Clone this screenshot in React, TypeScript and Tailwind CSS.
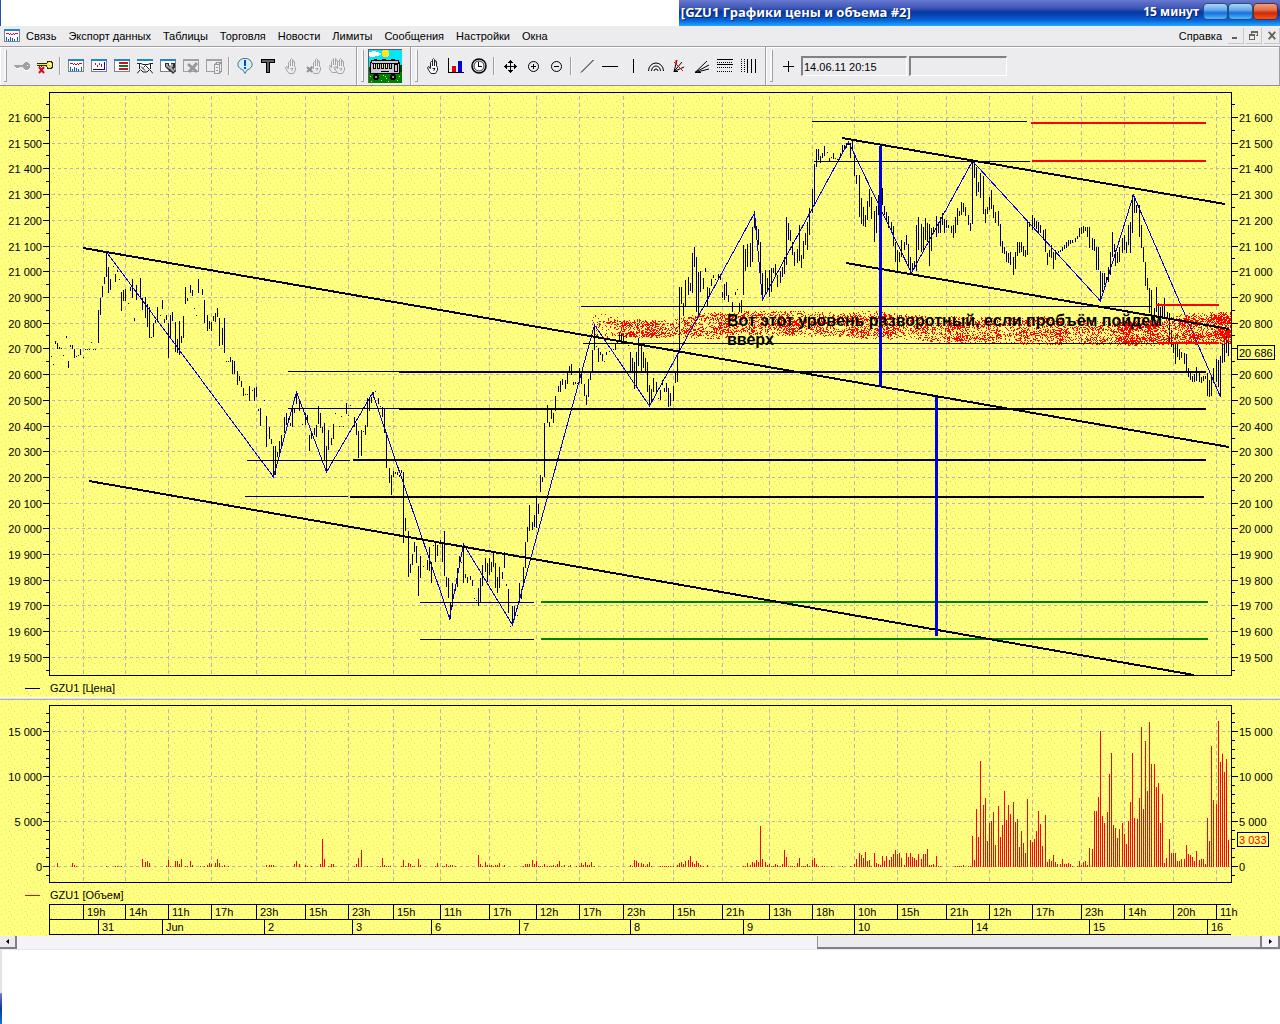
import React from 'react';

const PRICE_BARS = `51,356,357 53,364,365 55,341,344 57,343,349 59,347,349 61,348,349 63,355,356 66,336,338 68,361,368 70,345,347 72,345,349 74,349,358 76,356,357 78,355,356 80,349,355 83,357,358 85,349,350 87,349,350 89,349,350 91,342,343 93,349,350 95,349,350
98,310,343 100,298,315 102,286,297 104,277,284 106,252,277 108,267,293 110,279,290 113,266,267 115,274,282 117,270,272 119,279,280 121,292,311 123,290,301 125,289,301 128,303,304 130,287,291 132,279,298 134,318,321 136,285,300 140,278,299 142,298,310 145,297,318 147,304,327 149,307,338
151,337,338 153,323,337 155,320,323 157,307,320 160,315,316 162,300,309 164,319,323 166,315,320 168,323,358 170,315,338 172,312,321 175,322,352 177,339,353 179,321,355 181,336,343 183,316,338 185,287,304 187,298,301 190,285,293 192,290,296 194,308,309 196,315,316 198,279,293
202,289,295 204,300,323 207,315,331 209,321,329 211,322,331 213,316,321 215,313,322 217,308,317 219,318,346 222,328,345 224,318,353 226,361,362 228,361,362 230,357,362 232,360,374 234,361,374 237,371,385 239,376,381 241,381,387 243,388,396 245,394,395 247,394,395 249,386,401
252,390,391 254,388,401 256,387,397 258,409,411 260,408,426 264,400,401 266,416,447 269,427,439 271,439,444 273,446,477 275,446,475 277,452,457 279,441,453 281,435,446 284,417,433 286,413,425 288,418,420 290,423,426 292,408,427 294,409,413 296,391,404 299,400,411
302,424,425 305,413,425 307,415,422 309,435,451 311,431,439 314,428,435 316,425,437 318,406,424 320,413,428 322,427,433 324,423,460 326,446,472 328,430,450 331,438,445 333,424,439 335,413,414 339,426,427 341,416,417 343,426,427 346,403,414 348,415,416 350,405,406
354,417,427 356,423,435 358,431,458 361,430,456 363,431,432 365,425,435 367,398,427 369,397,411 371,397,403 373,392,395 375,391,392 378,398,404 380,406,407 382,407,417 384,409,433 386,433,468 389,468,483 391,475,495 393,471,477 395,472,474 397,472,475 399,475,477
401,470,473 403,472,543 405,518,531 408,531,577 410,564,573 412,554,565 414,542,552 416,546,563 418,566,596 420,556,578 423,566,567 425,546,547 427,560,570 429,547,571 431,562,583 433,545,546 435,542,562 437,545,556 440,540,543 442,542,562 444,531,576 446,577,587 448,578,598
450,603,619 452,583,607 455,585,591 457,568,587 459,556,568 461,562,563 463,543,583 465,574,578 467,577,583 470,576,580 472,580,586 474,598,599 476,600,601 478,588,606 480,578,603 482,565,586 485,558,572 487,563,582 489,558,575 491,562,572 493,552,567 495,563,588 497,577,593
499,567,588 502,572,579 504,552,568 506,584,586 508,589,613 510,626,627 512,606,624 514,606,617 517,615,616 519,583,602 521,589,599 523,567,586 525,542,568 527,527,542 529,505,531 532,522,530 534,515,527 536,498,528 538,504,514 540,475,492 542,477,482 544,423,477 547,405,423
549,422,427 551,410,419 553,413,423 555,396,411 558,386,392 560,381,392 562,379,385 565,380,389 567,372,384 569,366,373 571,364,375 573,382,385 575,382,384 577,383,384 579,368,383 581,374,384 584,384,396 586,395,405 588,379,397 590,372,380 592,350,372 594,325,350 596,346,347
598,348,362 600,352,355 602,354,361 604,361,362 606,352,355 609,351,352 613,349,350 615,343,350 617,340,344 619,333,340 621,333,342 623,333,342 626,335,338 628,345,346 630,352,371 632,358,373 634,362,389 636,352,387 638,338,366 641,345,372 643,352,368 645,358,371 647,362,392
649,385,407 651,389,402 653,378,392 656,382,392 658,398,399 660,390,400 662,380,385 664,388,392 666,383,392 668,388,407 670,393,406 673,386,401 675,372,383 677,353,382 679,287,350 681,287,304 683,303,316 685,280,306 688,277,295 690,283,291 692,253,293 694,247,267 696,257,312
698,272,315 700,271,292 703,278,289 705,268,272 707,287,307 709,288,296 711,279,286 713,275,278 715,279,280 718,274,280 720,275,280 722,292,298 724,284,300 726,282,296 728,295,302 732,302,312 735,292,295 737,289,290 739,303,312 741,300,313 743,245,295 745,249,271 747,244,267
750,243,267 752,227,262 754,211,228 756,226,235 758,229,245 760,242,273 762,273,297 765,270,295 767,278,292 769,270,297 771,268,292 773,268,273 775,264,275 777,275,287 780,271,283 782,267,277 784,257,274 786,217,265 788,223,240 790,230,241 792,242,255 794,252,266 797,249,263
799,225,261 801,255,268 803,241,259 805,233,245 807,222,250 809,208,235 812,189,213 814,164,206 816,149,167 818,149,160 820,156,163 822,153,158 824,146,156 827,152,153 829,158,161 831,157,158 833,153,159 835,158,159 837,159,160 840,153,158 842,145,153 844,145,150 846,143,148
848,141,145 850,143,158 852,140,150 854,153,176 856,175,184 859,175,217 861,198,224 863,207,226 865,215,227 867,201,220 869,189,207 871,197,219 874,211,242 876,206,233 878,195,215 882,188,205 884,206,215 886,212,220 888,216,228 891,222,232 893,226,246 895,242,262 897,250,271
899,252,262 901,240,257 904,242,250 906,235,245 908,244,266 910,257,273 912,263,272 914,261,267 916,225,271 918,217,250 921,224,252 923,227,250 925,218,240 927,223,242 929,224,266 931,228,251 933,227,234 936,216,237 938,223,233 940,217,233 942,213,225 944,219,233 946,220,228
948,225,228 951,226,233 953,225,238 955,217,233 957,208,225 959,211,216 961,202,215 963,203,212 965,207,216 968,215,225 970,223,231 972,161,224 974,164,178 976,167,196 978,182,192 980,173,198 983,176,214 985,209,223 987,207,214 989,197,210 991,190,209 993,205,218 995,212,223
998,211,226 1000,224,246 1002,241,253 1004,247,254 1006,251,262 1008,253,263 1010,252,265 1013,257,275 1015,252,269 1017,242,256 1019,242,253 1021,242,252 1023,246,256 1025,250,257 1027,222,255 1029,222,227 1032,215,230 1034,218,227 1036,221,229 1038,222,233 1040,225,233 1043,230,240
1045,229,252 1047,253,265 1049,250,257 1051,245,258 1053,252,269 1055,250,260 1058,251,253 1060,250,252 1062,247,251 1064,245,249 1066,242,248 1068,240,246 1070,240,244 1072,240,243 1075,238,242 1077,236,239 1079,228,237 1081,227,234 1083,226,233 1085,227,231 1087,227,237 1089,227,248
1092,238,250 1094,239,251 1096,247,270 1098,247,270 1100,271,300 1102,273,292 1104,273,285 1106,277,283 1108,267,282 1110,252,275 1112,232,257 1114,244,252 1115,250,266 1117,252,263 1119,247,262 1122,238,253 1124,235,250 1126,242,253 1128,225,245 1130,222,253 1132,195,233 1134,196,213
1136,205,213 1139,205,237 1141,225,248 1143,247,262 1145,262,286 1147,278,290 1149,288,313 1151,290,320 1154,308,320 1156,287,312 1158,303,317 1160,307,320 1162,305,318 1164,298,317 1167,312,318 1169,313,343 1171,330,347 1173,342,353 1175,343,364 1177,344,357 1179,349,360 1181,352,358
1184,353,364 1186,354,372 1188,368,377 1190,373,380 1192,376,382 1194,374,382 1196,367,381 1199,373,382 1201,377,383 1203,376,381 1205,376,379 1207,373,396 1209,380,397 1211,377,396 1213,368,383 1216,359,382 1218,360,387 1220,356,397 1222,343,363 1224,338,362 1226,329,353 1228,340,356`;

const VOLUME_BARS = `57,3 72,3 74,1 76,0 106,0 115,0 117,0 121,0 142,7 145,4 147,5 149,3 166,0 168,6 170,0 175,5 177,5 179,2 181,7 185,0 187,0 190,5 192,1 200,0 204,0 207,1 209,3 211,2 215,3 217,7 219,3 222,0 224,1 228,0 266,1 269,1 271,1 273,1 294,2 296,5 299,2 305,1 307,0 311,0 320,2 322,27 324,7 328,0 331,2 333,2
354,0 356,2 358,8 361,16 367,0 380,0 382,8 384,1 386,0 388,0 390,0 401,0 403,6 405,0 408,3 410,2 412,0 414,0 418,7 420,1 435,0 437,3 442,0 444,0 446,2 448,0 450,1 452,1 455,0 478,11 480,2 482,0 485,4 487,1 489,1 491,1 493,0 495,1 497,1 499,3 504,1 523,0 525,2 527,2 529,2 532,6 534,2 536,5
538,0 540,0 542,0 544,2 547,0 549,0 551,0 553,1 555,0 557,2 559,5 561,0 564,1 568,0 570,1 576,0 579,0 581,3 583,1 585,4 587,1 589,1 591,4 594,0 630,1 632,0 634,6 636,5 638,3 641,3 643,2 645,0 647,2 649,4 651,0 660,0 662,0 664,0 666,0 668,0 670,0 673,0 677,1 679,3 681,4 683,2 685,5 688,6 690,10
692,4 694,2 696,5 698,3 700,1 703,0 707,1 743,0 745,0 747,3 750,1 752,4 754,3 756,6 758,4 760,40 762,7 765,4 767,1 769,2 771,0 773,0 775,2 777,1 780,0 782,2 784,16 786,9 788,0 790,0 792,0 794,0 797,3 799,8 801,0 803,0 805,0 807,2 809,0 812,6 814,8 816,2 818,0 822,0 824,0 831,0 842,0 850,0
854,2 856,7 859,13 861,11 863,8 865,14 867,5 869,6 871,0 874,13 876,3 878,2 880,1 882,10 884,5 886,10 889,6 891,9 893,12 895,16 897,12 899,13 901,8 904,1 906,13 908,9 910,13 912,9 914,8 916,6 918,12 921,7 923,12 925,12 927,17 929,1 931,1 933,2 936,10 938,0 940,0 955,0 957,0 959,0 961,0 963,1
968,0 970,0 972,30 974,6 976,57 978,29 980,105 983,61 985,68 987,25 989,43 991,45 993,54 995,21 998,60 1000,29 1002,41 1004,75 1006,46 1008,61 1010,52 1013,64 1015,44 1017,47 1019,19 1021,35 1023,23 1025,13 1027,67 1030,26 1032,24 1034,27 1036,35 1038,55 1040,42 1042,20 1045,51 1047,4 1049,7
1051,5 1053,11 1055,4 1057,2 1060,2 1062,7 1064,2 1066,2 1068,3 1070,2 1072,0 1077,0 1079,5 1081,1 1083,4 1085,5 1087,1 1089,18 1092,17 1094,55 1096,55 1098,69 1100,135 1102,50 1104,43 1107,54 1109,92 1111,113 1113,41 1115,38 1117,28 1119,37 1122,43 1124,32 1126,22 1128,45 1130,64 1132,113
1134,48 1137,47 1139,68 1141,139 1143,57 1145,125 1147,75 1149,144 1151,102 1154,102 1156,79 1158,83 1160,43 1162,72 1164,3 1166,8 1169,27 1171,13 1173,13 1175,13 1177,5 1179,5 1181,7 1184,7 1186,21 1188,12 1190,11 1192,9 1194,5 1196,15 1199,6 1201,7 1203,7 1205,2 1207,48 1209,25 1211,120
1213,66 1216,62 1218,145 1220,104 1222,112 1224,94 1226,107 1228,26`;

const HOURS: [number, string][] = [
  [83, '19h'], [125, '14h'], [168, '11h'], [211, '17h'], [256, '23h'], [305, '15h'], [348, '23h'], [393, '15h'],
  [440, '11h'], [489, '17h'], [536, '12h'], [579, '17h'], [623, '23h'], [673, '15h'], [722, '21h'], [769, '13h'],
  [812, '18h'], [854, '10h'], [897, '15h'], [946, '21h'], [989, '12h'], [1032, '17h'], [1081, '23h'], [1124, '14h'],
  [1173, '20h'], [1216, '11h'],
];

const DAYS: [number, string][] = [
  [98, '31'], [162, 'Jun'], [264, '2'], [352, '3'], [431, '6'], [519, '7'],
  [630, '8'], [743, '9'], [854, '10'], [972, '14'], [1089, '15'], [1207, '16'],
];

const MENU = ['Связь', 'Экспорт данных', 'Таблицы', 'Торговля', 'Новости', 'Лимиты', 'Сообщения', 'Настройки', 'Окна'];

const parse = (s: string) => s.split(/\s+/).map(p => p.split(',').map(Number));

const pricePath = parse(PRICE_BARS).map(([x, a, b]) => `M${x} ${a}h1V${b}h-1z`).join('');
const volumePath = parse(VOLUME_BARS).map(([x, h]) => `M${x} ${866 - h}h1V867h-1z`).join('');

const priceY = (p: number) => Math.round(117 + (21600 - p) * 0.2571);
const thousands = (n: number) => (n < 1000 ? String(n) : `${Math.floor(n / 1000)} ${String(n % 1000).padStart(3, '0')}`);

// spray brush: x, top, bottom, density
const SPRAY = [
  [592, 311, 338, 0.15], [608, 314, 337, 0.28], [622, 319, 337, 0.45], [632, 319, 337, 0.8], [655, 320, 338, 0.6], [676, 319, 338, 0.38],
  [690, 315, 338, 0.4], [706, 312, 339, 0.46], [722, 312, 339, 0.4], [745, 311, 336, 0.4], [790, 311, 336, 0.55],
  [830, 312, 337, 0.38], [880, 311, 339, 0.48], [905, 314, 340, 0.35], [935, 317, 343, 0.38], [962, 316, 343, 0.55],
  [1000, 317, 343, 0.3], [1040, 316, 345, 0.42], [1080, 320, 344, 0.38], [1110, 320, 345, 0.45], [1136, 317, 346, 0.75],
  [1165, 318, 345, 0.4], [1185, 313, 344, 0.5], [1215, 312, 345, 0.65], [1231, 312, 344, 0.7],
];

const sprayPath = (() => {
  let seed = 77;
  const rnd = () => {
    seed = (seed * 1664525 + 1013904223) % 4294967296;
    return seed / 4294967296;
  };
  let d = '';
  for (let i = 0; i < SPRAY.length - 1; i++) {
    const [x0, t0, b0, d0] = SPRAY[i];
    const [x1, t1, b1, d1] = SPRAY[i + 1];
    for (let x = x0; x < x1; x++) {
      const k = (x - x0) / (x1 - x0);
      const top = t0 + (t1 - t0) * k;
      const bottom = b0 + (b1 - b0) * k;
      const density = d0 + (d1 - d0) * k;
      for (let y = Math.round(top); y < bottom; y++) {
        const edge = Math.min(1, 0.4 + Math.min(y - top, bottom - y) / 8);
        const clump = 0.85 + 0.45 * Math.sin(x / 9 + y / 5) * Math.sin(y / 4 - x / 13);
        if (rnd() < density * edge * clump) d += `M${x} ${y}h1v1h-1z`;
      }
    }
  }
  return d;
})();

const CHART_FONT = 'font-["Liberation_Sans",sans-serif]';

const Dither = ({ id }: { id: string }) => (
  <defs>
    <pattern id={id} width="16" height="16" patternUnits="userSpaceOnUse">
      <rect width="16" height="16" fill="#ffff80" />
      <path fill="#f4d860" d="M1 2h1v1h-1zM6 1h1v1h-1zM11 3h1v1h-1zM3 6h1v1h-1zM8 5h1v1h-1zM14 7h1v1h-1zM1 10h1v1h-1zM10 9h1v1h-1zM5 13h1v1h-1zM12 12h1v1h-1zM9 15h1v1h-1z" />
      <path fill="#dff080" d="M14 0h1v1h-1zM5 9h1v1h-1zM8 12h1v1h-1zM15 14h1v1h-1zM12 6h1v1h-1zM2 14h1v1h-1z" />
    </pattern>
  </defs>
);

const PriceChart = () => {
  const major: number[] = [];
  for (let p = 21600; p >= 19500; p -= 100) major.push(p);

  return (
    <svg viewBox="0 86 1280 611" className={`block h-auto w-full text-[11px] ${CHART_FONT}`} shapeRendering="crispEdges" role="img" aria-label="GZU1 [Цена]">
      <Dither id="paper-price" />
      <rect y="86" width="1280" height="611" fill="url(#paper-price)" />

      <g stroke="#b8b4b8" strokeDasharray="3 3">
        {major.map(p => <path key={p} d={`M52 ${priceY(p) + 0.5}H1230`} />)}
        {HOURS.map(([x]) => <path key={x} d={`M${x + 0.5} 96V674`} strokeDasharray="4 3" />)}
      </g>

      <rect x="49.5" y="92.5" width="1182" height="583" fill="none" stroke="#000" />
      {major.map(p => (
        <g key={p}>
          <path stroke="#000" d={`M43 ${priceY(p) + 0.5}h6M1232 ${priceY(p) + 0.5}h6M46 ${priceY(p) - 12.5}h3M1232 ${priceY(p) - 12.5}h3`} />
          <text x="42" y={priceY(p) + 5} textAnchor="end">{thousands(p)}</text>
          {p !== 20700 && <text x="1239" y={priceY(p) + 5}>{thousands(p)}</text>}
        </g>
      ))}
      <path stroke="#000" d="M46 670.5h3M1232 670.5h3" />

      <path d={pricePath} />
      <path
        fill="none"
        stroke="#0000ee"
        d="M106.5 252 273.5 477 296.5 392 326.5 472 372.5 393 449.5 618 463.5 544 512.5 625 594.5 325 649.5 406 754.5 213 762.5 300 848.5 142 911.5 273 972.5 161 1100.5 301 1133.5 195 1220.5 397"
      />

      <path stroke="#000" d="M288 371.5h111M288 408.5h111M247 460.5h103M245 496.5h103M420 602.5h114M420 639.5h114M812 121.5h215M814 161.5h216M581 306.5h571M583 343.5h607" />
      <path stroke="#000" strokeWidth="2" d="M399 372h807M399 409h807M353 460h853M350 497h854" />
      <path stroke="#008000" strokeWidth="2" d="M541 602h667M541 639h667" />

      <path d={sprayPath} fill="#ff0000" />
      <path stroke="#000" strokeWidth="2" fill="none" d="M83 248 1229 447M89 481 1194 675M842 138 1225 204M846 263 1229 329" />
      <path stroke="#ff0000" strokeWidth="2" d="M1031 123h175M1032 161h174M1156 305h63M1157 343h62" />
      <path stroke="#0000e0" strokeWidth="3" d="M880.5 146V387M936.5 397V636" />

      <g className='font-["Liberation_Sans",sans-serif] text-[16px] font-bold'>
        <text x="727" y="326">Вот этот уровень разворотный, если пробъём пойдём</text>
        <text x="727" y="345">вверх</text>
      </g>

      <rect x="1237.5" y="345.5" width="37" height="14" fill="#ffff80" stroke="#000" />
      <text x="1239" y="357">20 686</text>

      <path stroke="#000" d="M25 688.5h15" />
      <text x="50" y="692">GZU1 [Цена]</text>
    </svg>
  );
};

const VolumeChart = () => (
  <svg viewBox="0 700 1280 236" className={`block h-auto w-full text-[11px] ${CHART_FONT}`} shapeRendering="crispEdges" role="img" aria-label="GZU1 [Объем]">
    <Dither id="paper-volume" />
    <rect y="700" width="1280" height="236" fill="url(#paper-volume)" />

    <g stroke="#b8b4b8" strokeDasharray="3 3">
      {[731, 776, 821, 866].map(y => <path key={y} d={`M52 ${y + 0.5}H1230`} />)}
      {HOURS.map(([x]) => <path key={x} d={`M${x + 0.5} 709V882`} strokeDasharray="4 3" />)}
    </g>

    <rect x="49.5" y="705.5" width="1182" height="177" fill="none" stroke="#000" />
    {Array.from({ length: 19 }, (_, i) => 713.5 + i * 9).map(y => <path key={y} stroke="#000" d={`M46 ${y}h3M1232 ${y}h3`} />)}
    {[15000, 10000, 5000, 0].map((v, i) => (
      <g key={v}>
        <path stroke="#000" d={`M43 ${731.5 + i * 45}h6M1232 ${731.5 + i * 45}h6`} />
        <text x="42" y={736 + i * 45} textAnchor="end">{thousands(v)}</text>
        <text x="1239" y={736 + i * 45}>{thousands(v)}</text>
      </g>
    ))}

    <path d={volumePath} fill="#ff0000" />

    <rect x="1237.5" y="832.5" width="31" height="14" fill="#ffff80" stroke="#000" />
    <text x="1239" y="844" fill="#ff0000">3 033</text>

    <path stroke="#ff0000" d="M25 895.5h15" />
    <text x="50" y="899">GZU1 [Объем]</text>

    <path stroke="#000" fill="none" d="M1231 904.5H49.5V934.5H1231M49 919.5H1231" />
    {HOURS.map(([x, label]) => (
      <g key={x}>
        <path stroke="#000" d={`M${x + 0.5} 904V919`} />
        <text x={x + 4} y="916">{label}</text>
      </g>
    ))}
    {DAYS.map(([x, label]) => (
      <g key={x}>
        <path stroke="#000" d={`M${x + 0.5} 919V934`} />
        <text x={x + 4} y="931">{label}</text>
      </g>
    ))}
  </svg>
);

const Glyph = ({ children }: { children: React.ReactNode }) => (
  <svg viewBox="0 0 16 16" className="block size-4" fill="none" stroke="#000" shapeRendering="crispEdges">{children}</svg>
);

const WindowFrame = ({ off }: { off?: boolean }) => (
  <>
    <path fill={off ? '#ececee' : '#fff'} stroke={off ? '#a0a0a4' : '#808088'} d="M.5 1.5h15v12H.5z" />
    <path stroke={off ? '#a0a0a4' : '#2088c8'} strokeWidth="2" d="M0 2h16" />
  </>
);

const HAND = 'M5.5 10V4.5L6.5 3.5 7.5 4.5V8M7.5 4.5V1.5L8.5.5 9.5 1.5V8M9.5 5 10.5 2.5 11.5 3.5V8L12.5 9.5V12L10.5 15.5H6L3.5 12 2.5 9.5 4 8.5 5.5 11M7.5 10.5H10L8.5 13';

const HandGlyph = ({ off }: { off?: boolean }) => (
  <path shapeRendering="auto" fill={off ? '#ececee' : '#fff'} stroke={off ? '#a4a4a8' : '#202020'} d={HAND} />
);

const Quotes = () => (
  <Glyph>
    <WindowFrame />
    <path stroke="#e00020" d="M2 5.5h3M5 6.5h1M6 5.5h1M7 6.5h2M9 5.5h1M10 6.5h1M11 5.5h3" />
    <path stroke="#0060d0" d="M2.5 9v4M4.5 11v2M6.5 9v4M8.5 10v3M10.5 11v2M13.5 9v4" />
  </Glyph>
);

interface ToolProps {
  label: string;
  children: React.ReactNode;
}

const Tool = ({ label, children }: ToolProps) => (
  <button type="button" aria-label={label} className="flex h-6 w-[23px] shrink-0 items-center justify-center">
    {children}
  </button>
);

const Divider = () => <div className="mx-[3px] h-[18px] w-0.5 shrink-0 border-l border-[#a0a0a4] bg-[#f8f8fa]" />;

const Grip = () => <div className="mr-[3px] ml-1 h-8 w-[3px] shrink-0 border-r border-b border-[#a0a0a4] bg-[#f8f8fa]" />;

const Band = ({ children, className = '' }: { children: React.ReactNode; className?: string }) => (
  <div className={`flex h-full items-center border-t border-r border-b border-[#a0a0a4] border-b-[#909094] shadow-[inset_1px_1px_0_#fff] ${className}`}>
    {children}
  </div>
);

const Bus = () => (
  <svg viewBox="0 0 34 34" className="block size-[34px]" shapeRendering="crispEdges">
    <path fill="#00e8f8" d="M0 0h34v34H0z" />
    <path fill="#fff" d="M1 3h3V2h4v1h3v1h2v2h-2v1H7v1H2V7H1z" />
    <path fill="#ffe820" d="M15 1h5v1h1v5h-1v1h-5V7h-1V2h1z" />
    <path fill="#004800" d="M0 20h1v-2h1v4h30v-6h2v8H0z" />
    <path fill="#008000" d="M0 23h34v11H0z" />
    <path fill="#000" d="M3 11h28v2h1v12H2V13h1zM6 10h3v1H6zM14 10h4v1h-4zM23 10h4v1h-4z" />
    <path fill="#c8c8d0" d="M4 12h26v2H4zM3 14h28v10H3z" />
    <path fill="#000" d="M4 14h27v1H4zM5 15h3v5H5zM9 15h3v5H9zM13 15h3v5h-3zM17 15h3v5h-3zM21 15h3v5h-3zM26 15h4v8h-4zM13 22h8v1h-8z" />
    <path fill="#ffe880" d="M6 15h1v4H6zM10 15h1v4h-1zM14 15h1v4h-1zM18 15h1v4h-1z" />
    <path fill="#c8c8d0" d="M22 15h1v4h-1zM27 16h2v6h-2z" />
    <path fill="#000" d="M6 25h4v1h1v4h-1v1H6v-1H5v-4h1zM23 25h4v1h1v4h-1v1h-4v-1h-1v-4h1z" />
    <path fill="#909090" d="M7 27h2v2H7zM24 27h2v2h-2z" />
    <path fill="#e8f020" d="M2 27h1v1H2zM15 26h1v1h-1zM18 29h1v1h-1zM31 27h1v1h-1zM13 31h1v1h-1zM3 32h1v1H3zM29 31h1v1h-1zM20 32h1v1h-1zM17 27h1v1h-1z" />
    <path fill="none" stroke="#606060" d="M.5 34V.5H34" />
  </svg>
);

const TitleBar = () => (
  <div className="flex h-[26px] border-l border-[#2050b0] bg-white">
    <div className="w-[53%] shrink-0" />
    <div className="flex min-w-0 grow items-center bg-[linear-gradient(#6878d0_0,#4058b8_30%,#0838a0_46%,#0848b8_62%,#0868e0_80%,#28a8f8_100%)] pr-0.5 pl-0.5 font-bold text-white [text-shadow:1px_1px_0_#102060]">
      <h1 className='font-["Noto_Sans",sans-serif] text-[13px] whitespace-nowrap'>[GZU1 Графики цены и объема #2]</h1>
      <span className='mr-1 mb-0.5 ml-auto font-["Noto_Sans",sans-serif] text-[12px] whitespace-nowrap'>15 минут</span>
      <div className="mb-1 flex">
        <button type="button" aria-label="Свернуть" className="h-[17px] w-[25px] rounded-sm border border-[#205080] bg-[linear-gradient(#a8d8f8,#68a8e8_40%,#1070e0_60%,#58b8f8)]" />
        <button type="button" aria-label="Развернуть" className="h-[17px] w-[25px] rounded-sm border border-[#205080] bg-[linear-gradient(#a8d8f8,#68a8e8_40%,#1070e0_60%,#58b8f8)]" />
        <button type="button" aria-label="Закрыть" className="h-[17px] w-[25px] rounded-sm border border-[#702818] bg-[linear-gradient(#f0a080,#e07048_40%,#d02808_60%,#e85828)]" />
      </div>
    </div>
  </div>
);

const MenuBar = () => (
  <nav className='flex h-5 items-center bg-[#ececee] pl-1 font-["Liberation_Sans",sans-serif] text-[11px] leading-4 text-black'>
    <Quotes />
    {MENU.map(item => (
      <button key={item} type="button" className="px-1.5 whitespace-nowrap">{item}</button>
    ))}
    <button type="button" className="mr-1.5 ml-auto">Справка</button>
    <div className="flex gap-0.5">
      <button type="button" aria-label="Свернуть окно" className="size-4 border-r border-b border-[#c8c8cc]">
        <svg viewBox="0 0 16 16" shapeRendering="crispEdges"><path fill="#606058" d="M4 10h6v2H4z" /></svg>
      </button>
      <button type="button" aria-label="Восстановить окно" className="size-4 border-r border-b border-[#c8c8cc]">
        <svg viewBox="0 0 16 16" fill="none" stroke="#606058" shapeRendering="crispEdges"><path d="M5 3.5h8M5.5 3v3M12.5 3v5M11 8.5h2M5 4.5h8M3.5 6.5h6v6h-6zM3 7.5h7" /></svg>
      </button>
      <button type="button" aria-label="Закрыть окно" className="size-4 border-r border-b border-[#c8c8cc]">
        <svg viewBox="0 0 16 16" fill="none" stroke="#606058" strokeWidth="2"><path d="M5 4 12 12M12 4 5 12" /></svg>
      </button>
    </div>
  </nav>
);

const Toolbar = () => (
  <div className="flex h-10 bg-[#ececee]">
    <Band>
      <Grip />
      <Tool label="Подключиться">
        <Glyph><path fill="#a0a0a4" stroke="none" d="M0 7h9V6h1V5h1V4h3v1h1v1h1v4h-1v1h-1v1h-3v-1h-1v-1H9V9H5v1H2V9H1V8H0z" /><path stroke="#fff" d="M13 7.5h1M3 10.5h2M10 12.5h5" /></Glyph>
      </Tool>
      <Tool label="Отключиться">
        <Glyph>
          <path fill="#f8e850" stroke="#302800" d="M0 5.5h9.5l1.5-2h3l1.5 1.5v4L14 10.5h-3L9.5 8.5V7.500H0" />
          <path stroke="#302800" d="M2.5 8v1M4.5 8v1" />
          <path stroke="#fff" strokeWidth="2" d="M12 6h2" />
          <path stroke="#d01020" strokeWidth="2" shapeRendering="auto" d="M2 9 7 15M7 9 2 15" />
        </Glyph>
      </Tool>
      <Divider />
      <Tool label="Таблица котировок"><Quotes /></Tool>
      <Tool label="График">
        <Glyph><WindowFrame /><path stroke="#e00020" d="M4.5 5v2M6.5 7v2M8.5 5v2M10.5 6v3" /><path stroke="#0000e0" d="M2 11.500h11.500V4" /></Glyph>
      </Tool>
      <Tool label="Очередь заявок">
        <Glyph><WindowFrame /><path stroke="#d01020" strokeWidth="2" d="M5 5h9M5 11h9" /><path stroke="#008020" strokeWidth="2" d="M5 8h9" /></Glyph>
      </Tool>
      <Tool label="Сделки">
        <Glyph>
          <path fill="#fff" stroke="none" d="M1 2h14v8H1z" />
          <path stroke="#2088c8" strokeWidth="2" d="M0 2h16" />
          <path stroke="#202020" shapeRendering="auto" d="M0 5.5h4l2 1h5l2-1h3M2.5 6v5M13.5 6v5M3.5 11.5 6 14h4l2.5-2.500M6.500 9.500l2-2 4 4M4 8.500l4 4M0 15.500 3 12M16 15.500 13 12" />
        </Glyph>
      </Tool>
      <Tool label="Настройка таблицы">
        <Glyph>
          <WindowFrame />
          <path stroke="#303030" strokeWidth="4" shapeRendering="auto" d="M9 9 14.500 14.500M7 5v3l3 3 3-2V5" />
          <path stroke="#a8a8b0" strokeWidth="2" shapeRendering="auto" d="M7 6v2l3 2 2-2V6M10 9.500l4 4" />
        </Glyph>
      </Tool>
      <Tool label="Удалить таблицу">
        <Glyph><WindowFrame off /><path stroke="#98989c" strokeWidth="3" shapeRendering="auto" d="M5 6 14 14M14 5 6 14" /></Glyph>
      </Tool>
      <Tool label="Копировать таблицу">
        <Glyph><WindowFrame off /><path fill="#ececee" stroke="#98989c" d="M8.5 6.5 11 4.5h4.500V13L13 15.500H8.500zM8.500 6.500H13V15M13 6.500 15 4.500M10 9.500h2M10 12.500h2" /></Glyph>
      </Tool>
      <Divider />
      <Tool label="Новости">
        <Glyph>
          <path shapeRendering="auto" fill="#d8eefa" stroke="#507890" d="M6 .5h4l3 1.5 2 3v3L12.500 11l-2.500 1L8 15.500 6 12 3 10.500 1 8V5L3 2z" />
          <path stroke="#0050c0" strokeWidth="2" d="M8 2v6M8 9v2" />
        </Glyph>
      </Tool>
      <Tool label="Сообщение">
        <Glyph><path fill="#606060" d="M1.5 1.5h13v3h-5v10h-3v-10h-5z" /></Glyph>
      </Tool>
      <Tool label="Новая заявка"><Glyph><HandGlyph off /></Glyph></Tool>
      <Tool label="Снять заявку"><Glyph><g transform="translate(2 0)"><HandGlyph off /></g><path stroke="#909094" strokeWidth="2" shapeRendering="auto" d="M1 9 6 14M6 9 1 14" /></Glyph></Tool>
      <Tool label="Стоп-заявка">
        <Glyph><g transform="translate(-3 -1)"><HandGlyph off /></g><g transform="translate(3 0)"><HandGlyph off /></g></Glyph>
      </Tool>
      <div className="w-2" />
    </Band>
    <Band>
      <Grip />
      <button type="button" aria-label="Транспорт" className="mr-2 ml-px"><Bus /></button>
    </Band>
    <Band>
      <Grip />
      <Tool label="Перетаскивание"><Glyph><HandGlyph /></Glyph></Tool>
      <Tool label="Диаграмма">
        <Glyph><path d="M.5 0v14.500H16" /><path fill="#e00000" stroke="none" d="M4 8h4v6H4z" /><path fill="#0000e0" stroke="none" d="M10 3h4v11h-4z" /></Glyph>
      </Tool>
      <Tool label="Интервал">
        <Glyph><circle cx="8" cy="8" r="7" strokeWidth="1.5" shapeRendering="auto" /><circle cx="8" cy="8" r="5" stroke="#303030" fill="#fff" shapeRendering="auto" /><path d="M7.5 4v4.500H11" /></Glyph>
      </Tool>
      <Divider />
      <Tool label="Сдвиг">
        <Glyph><path d="M2 8.500h13M8.500 2v13M4.500 6v5M12.500 6v5M6 4.500h5M6 12.500h5M3.500 7v3M13.500 7v3M7 3.500h3M7 13.500h3" /></Glyph>
      </Tool>
      <Tool label="Увеличить"><Glyph><circle cx="8.5" cy="8.5" r="5" shapeRendering="auto" /><path d="M6 8.500h5M8.500 6v5" /></Glyph></Tool>
      <Tool label="Уменьшить"><Glyph><circle cx="8.5" cy="8.5" r="5" shapeRendering="auto" /><path d="M6 8.500h5" /></Glyph></Tool>
      <Divider />
      <Tool label="Линия"><Glyph><path shapeRendering="auto" d="M2 14.500 14.500 2" /></Glyph></Tool>
      <Tool label="Горизонталь"><Glyph><path d="M0 8.500h16" /></Glyph></Tool>
      <Tool label="Вертикаль"><Glyph><path d="M8.500 1v14" /></Glyph></Tool>
      <Tool label="Дуги">
        <Glyph><g shapeRendering="auto"><path d="M.5 13A7.500 8 0 0 1 15.500 13M3.500 13A4.500 5 0 0 1 12.500 13M6 13A2 2 0 0 1 10 13" /></g></Glyph>
      </Tool>
      <Tool label="Веер Ганна">
        <Glyph><g shapeRendering="auto"><path d="M3 13.500 6 2M3 13.500 11 4M3 13.500 13 9M3 13.500h4" /><path stroke="#e00000" d="M3 4 12 13M5 2v4" /></g></Glyph>
      </Tool>
      <Tool label="Веер Фибоначчи">
        <Glyph><g shapeRendering="auto"><path d="M1 14.500 13 3M1 14.500 15 7M1 14.500 15 11M1 14.500h6" /></g></Glyph>
      </Tool>
      <Tool label="Уровни">
        <Glyph><path d="M0 1.500h16M0 6.500h16" /><path strokeDasharray="1 1" d="M0 4.500h16M0 9.500h16M0 13.500h16" /></Glyph>
      </Tool>
      <Tool label="Временные зоны">
        <Glyph><path strokeDasharray="1 1" d="M1.500 1v14M4.500 1v14" /><path d="M7.500 1v14M11.500 1v14M15.500 1v14" /></Glyph>
      </Tool>
      <div className="w-1.5" />
    </Band>
    <Band className="grow">
      <Grip />
      <Tool label="Курсор"><Glyph><path d="M3 8.500h11M8.500 3v11" /></Glyph></Tool>
      <input
        aria-label="Дата и время"
        defaultValue="14.06.11 20:15"
        className={`mr-0.5 ml-0.5 h-5 w-[106px] border-t-2 border-r border-b border-l-2 border-[#808088] border-r-white border-b-white bg-[#ececee] pl-px text-[11px] leading-4 ${CHART_FONT}`}
      />
      <input aria-label="Значение" className="h-5 w-[98px] border-t-2 border-r border-b border-l-2 border-[#808088] border-r-white border-b-white bg-[#ececee]" />
    </Band>
  </div>
);

const ScrollBar = () => (
  <div className="flex h-[13px] bg-[#f4f4f8]">
    <button type="button" aria-label="Назад" className="flex w-[17px] shrink-0 items-center justify-center border-r-2 border-b-2 border-[#808088] bg-[#ececee]">
      <svg viewBox="0 0 3 5" className="h-[5px] w-[3px]"><path d="M3 0v5L0 2.500z" /></svg>
    </button>
    <div className="w-5/8" />
    <div className="grow border-r-2 border-b-2 border-l border-[#808088] border-l-[#909094] bg-[#ececee]" />
    <button type="button" aria-label="Вперёд" className="flex w-[18px] shrink-0 items-center justify-center border-r-2 border-b-2 border-[#808088] bg-[#f4f4f8]">
      <svg viewBox="0 0 3 5" className="h-[5px] w-[3px]"><path d="M0 0v5L3 2.500z" /></svg>
    </button>
  </div>
);

export default function App() {
  return (
    <div className="flex min-h-screen flex-col bg-white text-black">
      <TitleBar />
      <MenuBar />
      <Toolbar />
      <main>
        <PriceChart />
        <div className="h-[3px] border-t border-b border-t-white border-b-[#b0b0b8] bg-[#e0e0e8]" />
        <VolumeChart />
        <ScrollBar />
      </main>
      <div className="flex grow flex-col items-start border-t border-[#e8e8ec]">
        <div className="h-11 w-0.5 border-b border-[#909094] bg-[#e4e4e8]" />
        <div className="w-0.5 grow bg-[linear-gradient(#6878d0,#0838a0_50%,#0878e8)]" />
      </div>
    </div>
  );
}
